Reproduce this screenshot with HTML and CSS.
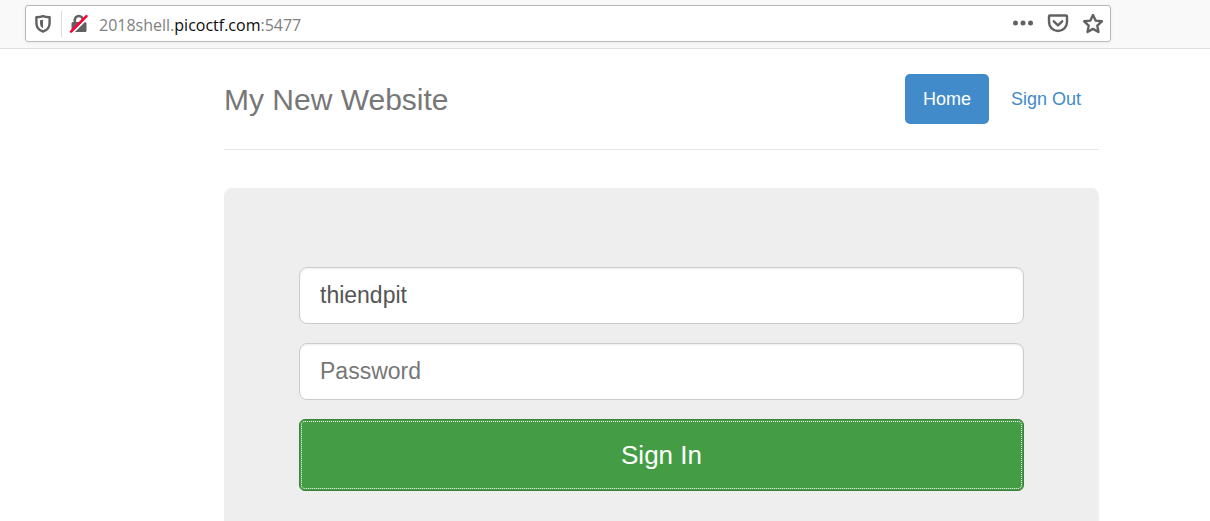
FILE: index.html
```
<!DOCTYPE html>
<html lang="en">
<head>
<meta charset="utf-8">
<title>My New Website</title>
<link rel="stylesheet" href="styles.css">
</head>
<body>
<div class="toolbar">
  <div class="urlbar">
    <button class="icon-button shield" type="button" aria-label="Tracking protection">
      <svg width="16" height="18" viewBox="0 0 16 18"><path d="M8 1.200C6.300 1.900 4 2.200 1.400 2.300V8c0 4.400 2.500 7.200 6.600 8.500 4.100-1.300 6.600-4.100 6.600-8.500V2.300C12 2.200 9.700 1.900 8 1.200Z" fill="none" stroke="#616161" stroke-width="2.400" stroke-linejoin="round"/><path d="M8 4.800v8.500C5.900 12.200 5 10.500 5 8V5.300Z" fill="#616161"/></svg>
    </button>
    <span class="divider"></span>
    <button class="icon-button lock" type="button" aria-label="Connection is not secure">
      <svg width="20" height="20" viewBox="0 0 20 20"><path d="M5.800 9V6a4 4 0 0 1 8 0v3" fill="none" stroke="#616161" stroke-width="2.600"/><rect x="2.500" y="8" width="15" height="10" rx="1.500" fill="#616161"/><path d="M3.500 19 19 3.500" stroke="#fff" stroke-width="2"/><path d="M2 17.700 17.500 2.200" stroke="#ff0039" stroke-width="2.600" stroke-linecap="round"/></svg>
    </button>
    <div class="url">2018shell.<span class="domain">picoctf.com</span>:5477</div>
    <div class="actions">
      <button class="icon-button" type="button" aria-label="Page actions">
        <svg width="22" height="22" viewBox="0 0 22 22" fill="#616161"><circle cx="3.500" cy="10" r="2.500"/><circle cx="11" cy="10" r="2.500"/><circle cx="18.500" cy="10" r="2.500"/></svg>
      </button>
      <button class="icon-button" type="button" aria-label="Save to Pocket">
        <svg width="22" height="22" viewBox="0 0 22 22" fill="none" stroke="#616161" stroke-width="2.400" stroke-linecap="round" stroke-linejoin="round"><path d="M3 2.500h16q1 0 1 1V9a9 9 0 0 1-18 0V3.500q0-1 1-1Z"/><path d="m6.800 8.300 4.200 4 4.200-4"/></svg>
      </button>
      <button class="icon-button" type="button" aria-label="Bookmark this page">
        <svg width="22" height="22" viewBox="0 0 22 22" fill="none" stroke="#616161" stroke-width="2.400" stroke-linejoin="round"><path d="m11 2 2.600 5.600 6.300.7-4.600 4.300 1.200 6.400L11 15.900 5.500 19l1.200-6.400-4.600-4.300 6.300-.7Z"/></svg>
      </button>
    </div>
  </div>
</div>
<div class="page">
  <header class="header">
    <h1 class="title">My New Website</h1>
    <nav class="nav">
      <a class="nav-link active" href="#">Home</a>
      <a class="nav-link" href="#">Sign Out</a>
    </nav>
  </header>
  <main class="panel">
    <form class="form">
      <input class="field" type="text" aria-label="Username" value="thiendpit">
      <input class="field" type="password" aria-label="Password" placeholder="Password">
      <button class="submit" type="button">Sign In</button>
    </form>
  </main>
</div>
</body>
</html>
```
FILE: styles.css
```
* {
  box-sizing: border-box;
}

body {
  display: flex;
  flex-direction: column;
  min-height: 100vh;
  margin: 0;
  background: #fff;
  font-family: "Liberation Sans", Arial, sans-serif;
}

.toolbar {
  padding: 5px 99px 6px 25px;
  border-bottom: 1px solid #e0e0e1;
  background: #f9f9fa;
}

.urlbar {
  display: flex;
  align-items: center;
  height: 37px;
  padding: 0 6px 0 9px;
  border: 1px solid #b8b8b9;
  border-radius: 3px;
  background: #fff;
  box-shadow: 0 1px 4px rgba(0, 0, 0, 0.06);
}

.icon-button {
  display: flex;
  padding: 0;
  border: 0;
  background: none;
}

.divider {
  width: 1px;
  height: 26px;
  margin: 0 7px 0 10px;
  background: #dcdcdc;
}

.url {
  flex: 1;
  margin-left: 10px;
  padding-top: 2px;
  color: #808080;
  font: 16px/24px "Open Sans", "Noto Sans", sans-serif;
}

.domain {
  color: #0c0c0d;
}

.actions {
  display: flex;
  gap: 13px;
}

.page {
  display: flex;
  flex: 1;
  flex-direction: column;
  padding: 25px 111px 0 224px;
}

.header {
  display: flex;
  align-items: center;
  justify-content: space-between;
  margin-bottom: 38px;
  padding-bottom: 25px;
  border-bottom: 1px solid #e5e5e5;
}

.title {
  margin: 0;
  padding-top: 2px;
  color: #777;
  font-size: 30px;
  font-weight: 400;
}

.nav {
  display: flex;
  gap: 4px;
}

.nav-link {
  padding: 12px 18px;
  border-radius: 5px;
  color: #428bca;
  font-size: 18px;
  line-height: 26px;
  text-decoration: none;
}

.nav-link.active {
  background: #428bca;
  color: #fff;
}

.panel {
  flex: 1;
  padding: 79px 75px 30px;
  border-radius: 8px 8px 0 0;
  background: #eee;
}

.form {
  display: flex;
  flex-direction: column;
  gap: 19px;
}

.field {
  width: 100%;
  height: 57px;
  padding: 0 20px;
  border: 1px solid #ccc;
  border-radius: 8px;
  background: #fff;
  box-shadow: inset 0 1px 2px rgba(0, 0, 0, 0.08);
  color: #555;
  font: 23px "Liberation Sans", Arial, sans-serif;
}

.field::placeholder {
  color: #777;
  opacity: 1;
}

.submit {
  height: 72px;
  border: 1px solid #398439;
  border-radius: 6px;
  outline: 1px dotted #fff;
  outline-offset: -3px;
  background: #449d44;
  color: #fff;
  font: 26px "Liberation Sans", Arial, sans-serif;
}
```
